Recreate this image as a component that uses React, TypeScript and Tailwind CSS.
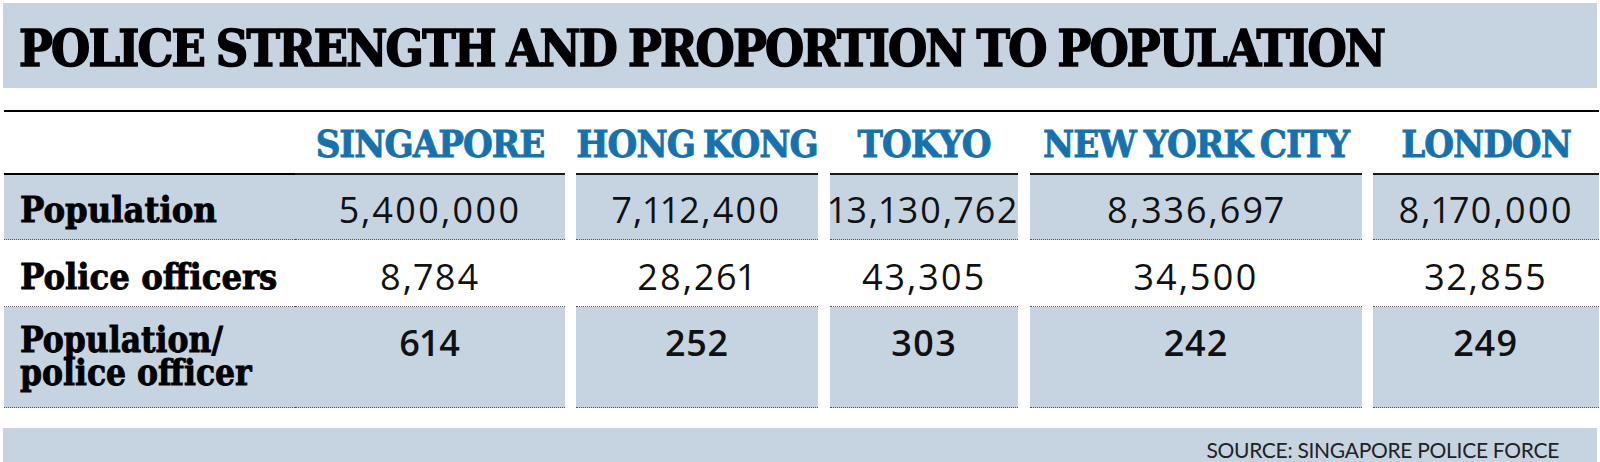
const SLAB = "font-['DejaVu_Serif_Condensed','DejaVu_Serif',serif] [font-stretch:condensed]"
const SANS = "font-['Open_Sans','Liberation_Sans',sans-serif] proportional-nums"

const COLS = [
  { city: 'SINGAPORE', w: 'w-[270px]', ml: 'ml-0', pop: '5,400,000', officers: '8,784', ratio: '614' },
  { city: 'HONG KONG', w: 'w-[242px]', ml: 'ml-[11px]', pop: '7,112,400', officers: '28,261', ratio: '252' },
  { city: 'TOKYO', w: 'w-[188px]', ml: 'ml-[12px]', pop: '13,130,762', officers: '43,305', ratio: '303' },
  { city: 'NEW YORK CITY', w: 'w-[332px]', ml: 'ml-[12px]', pop: '8,336,697', officers: '34,500', ratio: '242' },
  { city: 'LONDON', w: 'w-[226px]', ml: 'ml-[11px]', pop: '8,170,000', officers: '32,855', ratio: '249' },
]

const SHADE = 'bg-[#c6d4e2]'

export default function App() {
  return (
    <div className="w-[1600px] h-[462px] overflow-hidden bg-white">
      {/* Title */}
      <div className="pt-[3px] px-[3px]">
        <div className={`${SHADE} h-[85px] flex items-center pl-[16px]`}>
          <h1 className={`${SLAB} text-[50px] font-bold text-black tracking-[-1.8px] [word-spacing:-2px] leading-none whitespace-nowrap [-webkit-text-stroke:1.5px_black] pt-[6px]`}>
            POLICE STRENGTH AND PROPORTION TO POPULATION
          </h1>
        </div>
      </div>

      <div className="pl-[4px] pt-[22px]">
        <div className="h-[2px] bg-black w-[1595px]" />

        {/* Header row */}
        <div className="flex">
          <div className="w-[291px]">
            <div className="h-[61px]" />
            <div className="h-[2px] bg-black" />
          </div>
          {COLS.map(c => (
            <div key={c.city} className={`${c.w} ${c.ml}`}>
              <div className={`h-[61px] flex items-center justify-center pt-[2px] whitespace-nowrap ${SLAB} text-[38px] font-bold text-[#1672ae] tracking-[-1px] [word-spacing:-3px] [-webkit-text-stroke:0.8px_#1672ae]`}>
                {c.city}
              </div>
              <div className="h-[2px] bg-[#1a1a1a]" />
            </div>
          ))}
        </div>

        {/* Population */}
        <div className="flex">
          <div className={`w-[291px] h-[65px] ${SHADE} border-b border-dotted border-[#555] flex items-center pl-[16px] pt-[4px] ${SLAB} text-[36px] font-bold text-black [-webkit-text-stroke:0.8px_black]`}>
            Population
          </div>
          {COLS.map(c => (
            <div key={c.city} className={`${c.w} ${c.ml} h-[65px] ${SHADE} border-b border-dotted border-[#555] flex items-center justify-center pt-[6px] whitespace-nowrap ${SANS} text-[36px] font-medium tracking-[2px] text-[#111]`}>
              {c.pop}
            </div>
          ))}
        </div>

        {/* Police officers */}
        <div className="flex">
          <div className={`w-[291px] h-[67px] border-b border-dotted border-[#555] flex items-center pl-[16px] pt-[6px] ${SLAB} text-[36px] font-bold text-black [-webkit-text-stroke:0.8px_black]`}>
            Police officers
          </div>
          {COLS.map(c => (
            <div key={c.city} className={`${c.w} ${c.ml} h-[67px] border-b border-dotted border-[#555] flex items-center justify-center pt-[8px] ${SANS} text-[36px] font-medium tracking-[2px] text-[#111]`}>
              {c.officers}
            </div>
          ))}
        </div>

        {/* Population / police officer */}
        <div className="flex">
          <div className={`w-[291px] h-[101px] ${SHADE} border-b border-dotted border-[#555] pl-[16px] pt-[16px] ${SLAB} text-[35px] font-bold text-black leading-[33px] [-webkit-text-stroke:0.8px_black]`}>
            <div>Population/</div>
            <div>police officer</div>
          </div>
          {COLS.map(c => (
            <div key={c.city} className={`${c.w} ${c.ml} h-[101px] ${SHADE} border-b border-dotted border-[#555] flex justify-center pt-[16px] ${SANS} text-[36px] font-semibold tracking-[1px] text-[#111] leading-[40px]`}>
              {c.ratio}
            </div>
          ))}
        </div>
      </div>

      {/* Source */}
      <div className="pt-[20px] px-[3px]">
        <div className={`${SHADE} h-[40px] flex justify-end pr-[38px] pt-[6px]`}>
          <span className="font-['Lato','Open_Sans',sans-serif] text-[21px] text-[#222] tracking-[-0.3px]">
            SOURCE: SINGAPORE POLICE FORCE
          </span>
        </div>
      </div>
    </div>
  )
}
